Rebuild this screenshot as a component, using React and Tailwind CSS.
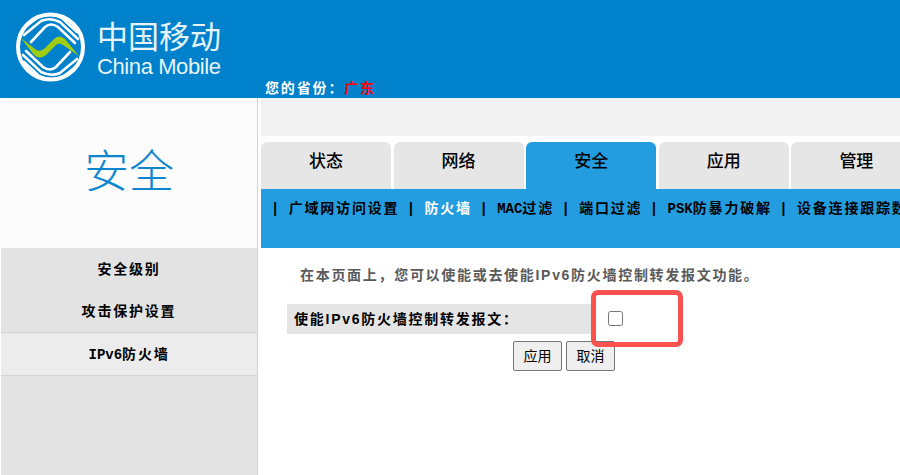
import React from 'react';

const serif = '[font-family:"Liberation_Serif","Noto_Sans_CJK_SC",serif]';
const sans = '[font-family:"Liberation_Sans","Noto_Sans_CJK_SC",sans-serif]';
const mono = '[font-family:"Liberation_Mono","Noto_Sans_CJK_SC",monospace]';

const tabs = ['状态', '网络', '安全', '应用', '管理'];
const subnav = ['广域网访问设置', '防火墙', 'MAC过滤', '端口过滤', 'PSK防暴力破解', '设备连接跟踪数'];
const sideItems = ['安全级别', '攻击保护设置'];

// latin runs sit tight, only the CJK glyphs are spaced out
function Spaced({ text }) {
  return text.split(/([A-Za-z0-9]+)/).map((part, i) =>
    i % 2 === 1 ? <span key={i} className="tracking-normal">{part}</span> : <span key={i}>{part}</span>
  );
}

function Logo() {
  const bands = (
    <g fill="none" stroke="#fff" strokeWidth="2.6" strokeLinecap="round">
      <path d="M7 17 L22 5 Q34 0 46 6 L61 20" />
      <path d="M8 23 L25 9 Q34 5 44 10 L62 27" />
      <path d="M15 30 L29 15 Q35 10 42 15 L59 31" />
    </g>
  );
  return (
    <svg width="70" height="70" viewBox="0 0 70 70" className="shrink-0">
      <circle cx="34.5" cy="35" r="32.5" fill="none" stroke="#fff" strokeWidth="4" />
      {bands}
      <g transform="rotate(180 34.5 35)">{bands}</g>
      <path d="M5 26 L19 37 Q24 41 29 36 L38 27 Q43 22 49 27 L63 44 L47 33 Q43 30 40 33 L30 43 Q24 48 18 43 Z" fill="#a0cc12" />
    </svg>
  );
}

export default function App() {
  return (
    <div className={`w-[900px] h-[475px] overflow-hidden flex flex-col bg-white ${serif}`}>
      {/* Header */}
      <div className="h-[98px] bg-[#0081cc] flex shrink-0 pl-[16px]">
        <div className="w-[249px] flex items-start pt-[12px] gap-[11px]">
          <Logo />
          <div className={`text-[#e6f4fb] ${sans} pt-[9px]`}>
            <div className="text-[31px] leading-[34px] whitespace-nowrap">中国移动</div>
            <div className="text-[22px] leading-[24px] tracking-[-0.4px] whitespace-nowrap">China Mobile</div>
          </div>
        </div>
        <div className="self-end h-[18px] text-[14px] leading-[18px] font-bold text-white whitespace-nowrap tracking-[1.85px]">
          您的省份：<span className="text-[#ff0000]">广东</span>
        </div>
      </div>

      <div className="flex flex-1 min-h-0">
        {/* Sidebar */}
        <div className="w-[258px] shrink-0 border-r border-[#d2d2d2] flex flex-col pl-px">
          <div className={`h-[150px] bg-[#fcfcfc] flex items-center justify-center text-[45px] text-[#0d86cf] font-light ${sans}`}>
            安全
          </div>
          <div className={`flex-1 bg-[#e3e3e3] text-[14px] font-bold text-black tracking-[1.8px] ${mono}`}>
            {sideItems.map((item) => (
              <div key={item} className="h-[42px] pt-[2px] flex items-center justify-center">{item}</div>
            ))}
            <div className="h-[44px] pt-[2px] bg-[#ececec] border-y border-[#d2d2d2] flex items-center justify-center">
              <Spaced text="IPv6防火墙" />
            </div>
          </div>
        </div>

        {/* Main */}
        <div className="flex-1 min-w-0 pl-[3px]">
          <div className="h-[38px] bg-[#f2f2f2]" />
          <div className="flex gap-[2.6px] pt-[6px] w-[700px]">
            {tabs.map((tab) => (
              <div
                key={tab}
                className={`w-[130px] h-[47px] shrink-0 rounded-t-[6px] flex items-center justify-center text-[17px] font-medium text-black pb-[8px] ${
                  tab === '安全' ? 'bg-[#249de0]' : 'bg-[#e6e6e6]'
                }`}
              >
                {tab}
              </div>
            ))}
          </div>
          <div className={`h-[59px] bg-[#249de0] flex items-start pt-[10px] pl-[10px] text-[14px] leading-[20px] font-bold text-black whitespace-nowrap overflow-hidden tracking-[1.8px] ${mono}`}>
            {subnav.map((item) => (
              <React.Fragment key={item}>
                <span className="mr-[7.5px]">|</span>
                <span className={`mr-[7.5px] ${item === '防火墙' ? 'text-white' : ''}`}><Spaced text={item} /></span>
              </React.Fragment>
            ))}
          </div>

          {/* Content */}
          <div className={`pt-[17px] pl-[26px] ${sans}`}>
            <p className="pl-[13px] text-[14px] leading-[20px] font-bold text-[#5a5a5a] tracking-[1.7px] whitespace-nowrap">
              在本页面上，您可以使能或去使能IPv6防火墙控制转发报文功能。
            </p>
            <div className="relative mt-[19px] w-[404px]">
              <div className="w-[306px] h-[30px] bg-[#e5e5e5] flex items-center pl-[7px] text-[14px] font-bold text-black tracking-[1.75px] whitespace-nowrap">
                使能IPv6防火墙控制转发报文：
              </div>
              <input type="checkbox" className="absolute left-[321px] top-[7px] w-[15px] h-[15px] m-0" />
              <div className="absolute left-[304px] top-[-14px] w-[92px] h-[57px] rounded-[7px] border-[5px] border-[#f9524f]" />
            </div>
            <div className="flex gap-[4px] mt-[7px] pl-[226px]">
              <button className="w-[49px] h-[30px] border border-[#767676] rounded-[2px] bg-[#efefef] text-[14px] text-black">应用</button>
              <button className="w-[49px] h-[30px] border border-[#767676] rounded-[2px] bg-[#efefef] text-[14px] text-black">取消</button>
            </div>
          </div>
        </div>
      </div>
    </div>
  );
}
